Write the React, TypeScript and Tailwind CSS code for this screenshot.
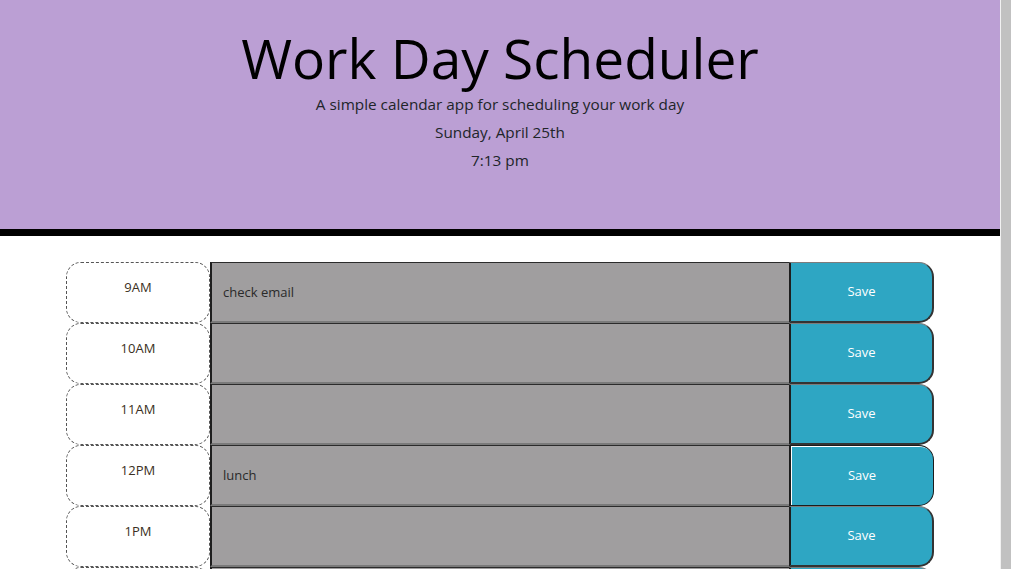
import React from "react";

const hours = [
  { label: "9AM", text: "check email" },
  { label: "10AM", text: "" },
  { label: "11AM", text: "" },
  { label: "12PM", text: "lunch" },
  { label: "1PM", text: "" },
  { label: "", text: "" },
];

const TimeBlock = ({ label, text, focused }: { label: string; text: string; focused: boolean }) => (
  <div className="flex h-[61px]">
    <div className="w-[144px] h-[61px] rounded-[15px] border border-dashed border-[#555] bg-white text-center text-[13px] leading-5 text-[#3a2f22] pt-[14px]">
      {label}
    </div>
    <div className="w-[579px] h-[61px] bg-[#a09e9f] border-t border-t-[#2b2b2b] border-l-2 border-l-[#1e1e1e] border-b-2 border-b-[#7a7a7a] px-[11px] pt-[19px] text-[13px] leading-5 text-[#2a2a2a]">
      {text}
    </div>
    <button
      className={
        focused
          ? "w-[145px] h-[61px] bg-[#2ea6c3] rounded-r-[15px] border border-l-2 border-[#1c1c1c] shadow-[inset_1px_1px_0_#fff] text-white text-[13px]"
          : "w-[145px] h-[61px] bg-[#2ea6c3] rounded-r-[15px] border-t border-t-[#7c7c7c] border-l-2 border-l-[#1e1e1e] border-r-2 border-r-[#333] border-b-2 border-b-[#333] text-white text-[13px]"
      }
    >
      {label ? "Save" : ""}
    </button>
  </div>
);

export default function App() {
  return (
    <div className="flex h-screen overflow-hidden bg-white font-['Open_Sans',sans-serif] text-[#212529]">
      <div className="w-[1000px] overflow-hidden">
        <header className="h-[236px] bg-[#bb9fd4] border-b-[7px] border-black text-center pt-[22px]">
          <h1 className="text-[55px] font-normal leading-[72px] text-black">Work Day Scheduler</h1>
          <p className="text-[15.3px] leading-[28px] -mt-[4px]">A simple calendar app for scheduling your work day</p>
          <p className="text-[15.3px] leading-[28px]">Sunday, April 25th</p>
          <p className="text-[15.3px] leading-[28px]">7:13 pm</p>
        </header>
        <div className="w-[868px] mx-auto mt-[26px]">
          {hours.map((h, i) => (
            <TimeBlock key={i} label={h.label} text={h.text} focused={i === 3} />
          ))}
        </div>
      </div>
      <div className="w-[1px] bg-[#f1f1f1]" />
      <div className="w-[10px] bg-[#c1c1c1]" />
    </div>
  );
}
